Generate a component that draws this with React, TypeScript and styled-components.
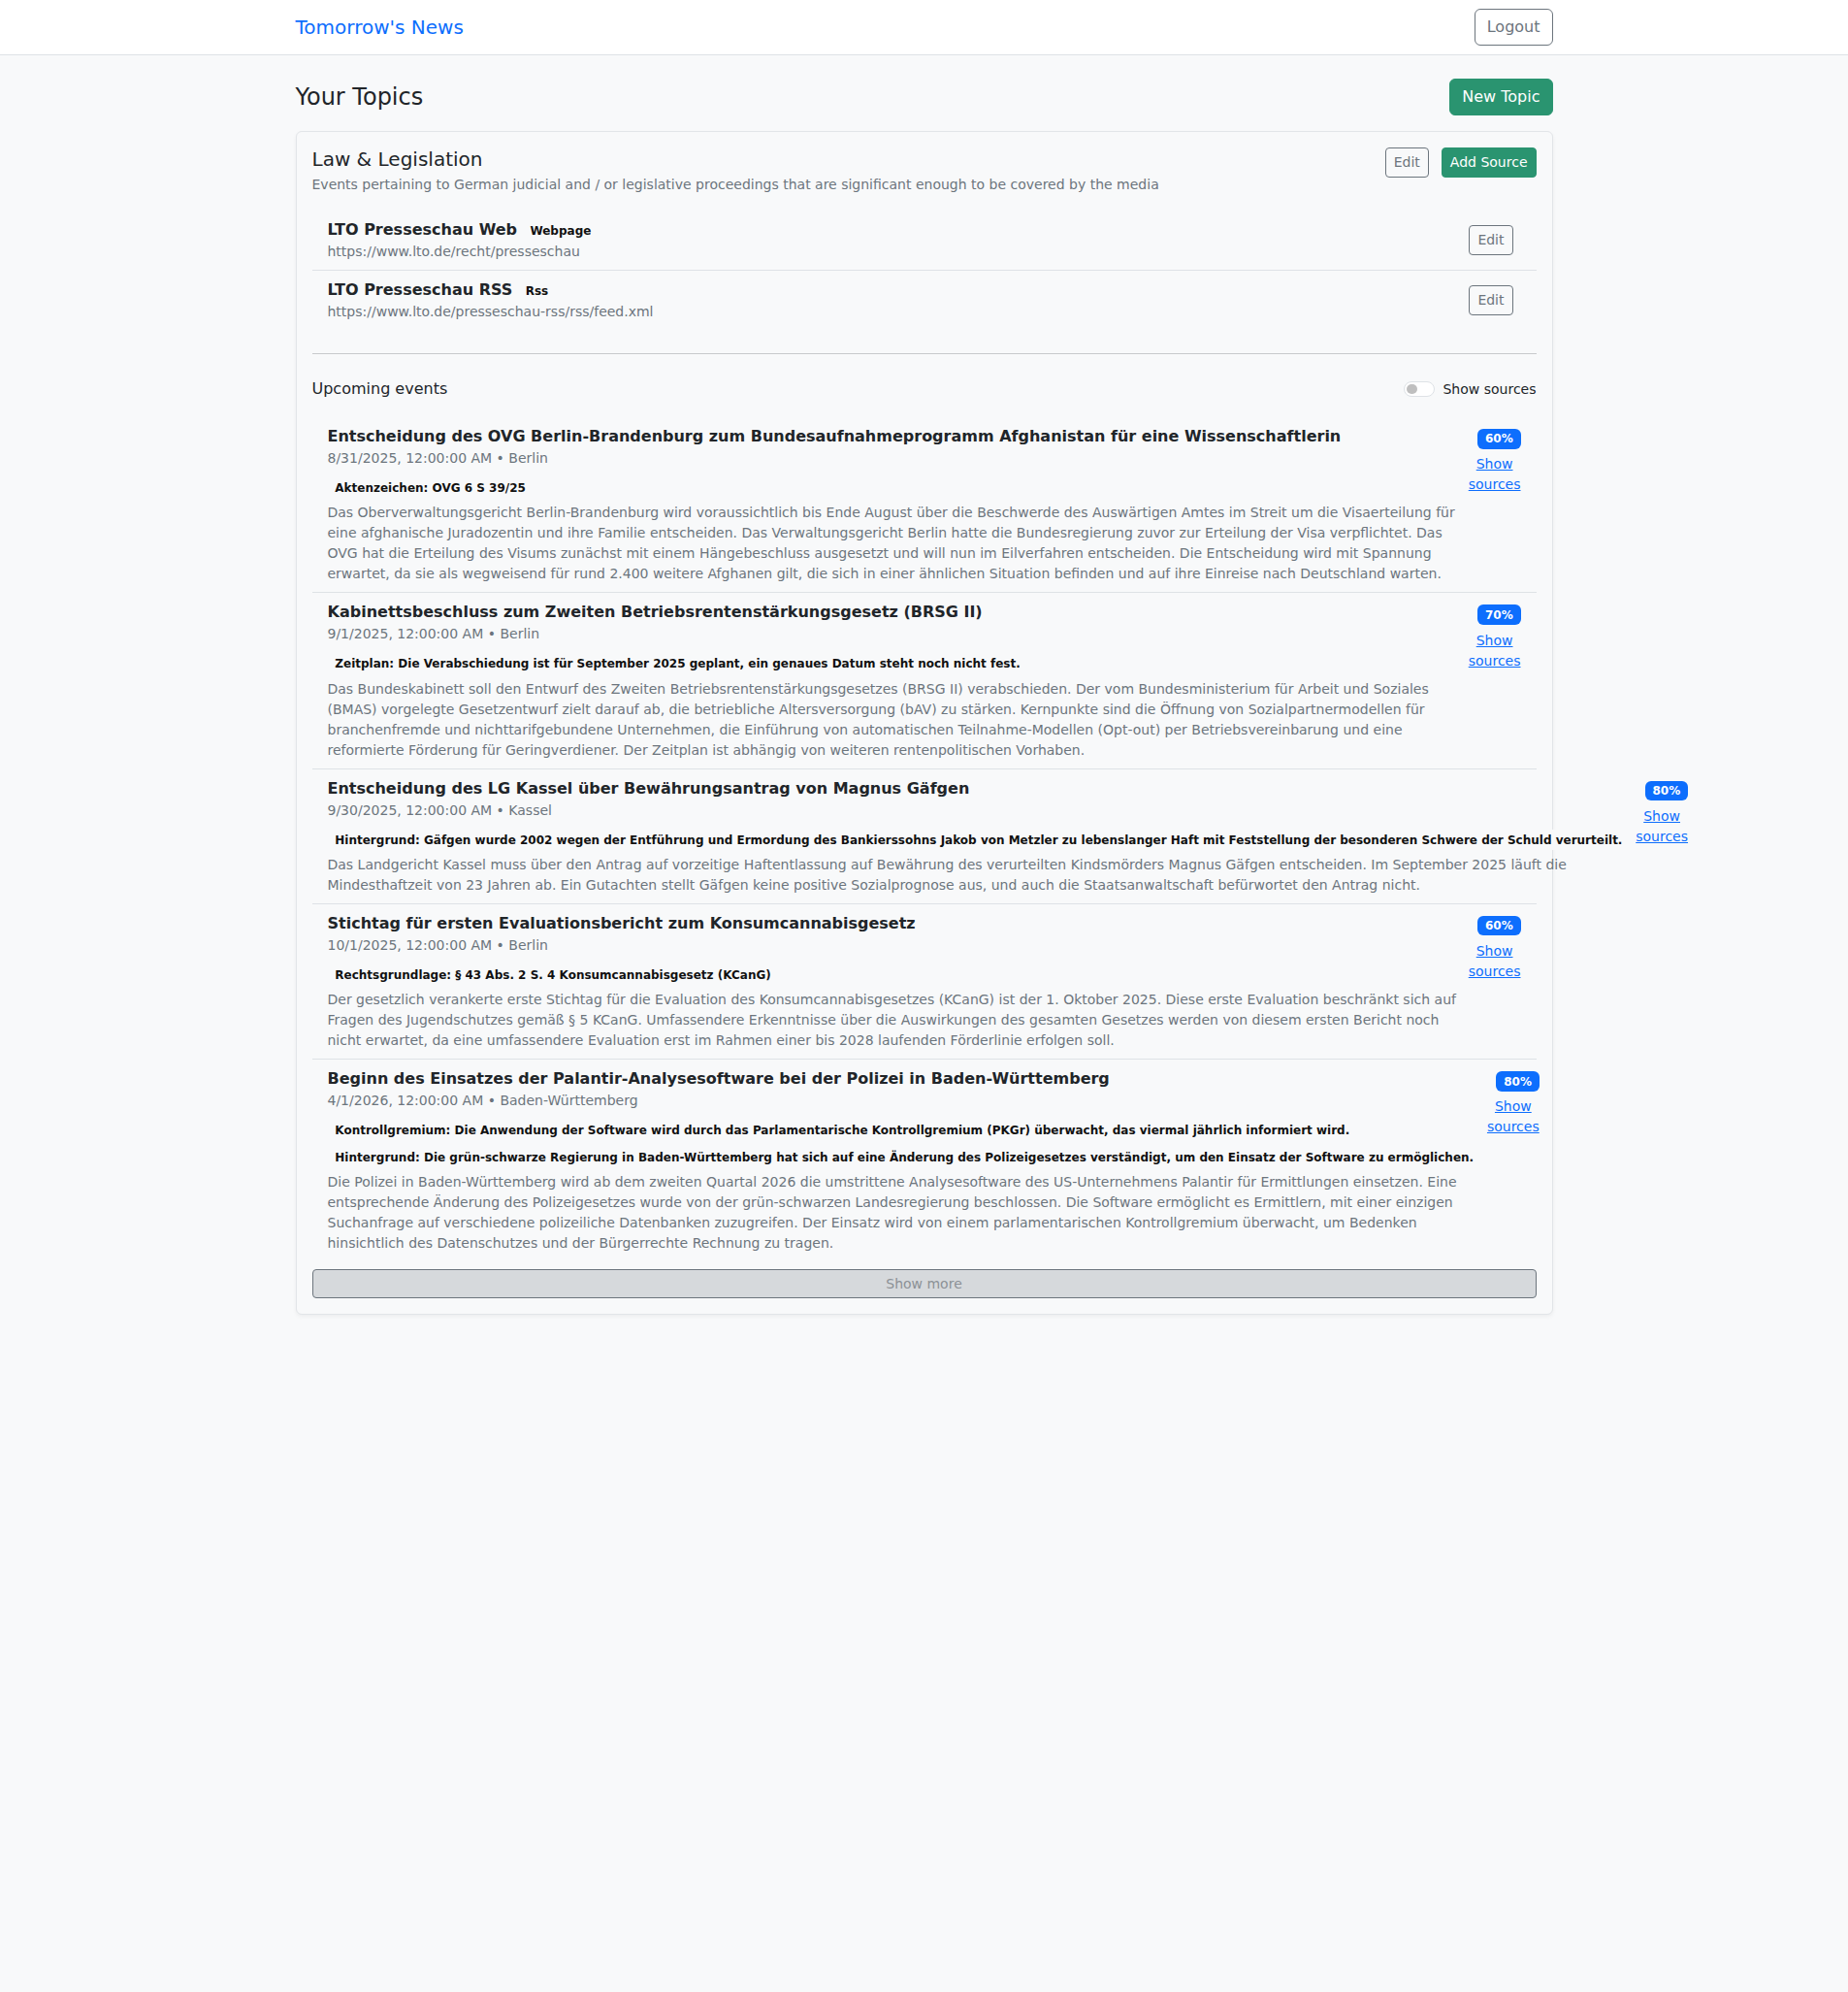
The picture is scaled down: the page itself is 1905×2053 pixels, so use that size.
import React from "react";
import styled, { createGlobalStyle, css } from "styled-components";

const GlobalStyle = createGlobalStyle`
  html, body {
    margin: 0;
    padding: 0;
  }
  body {
    background-color: #f8f9fa;
    color: #212529;
    font-family: "DejaVu Sans", "Noto Sans", sans-serif;
    font-size: 16px;
    line-height: 1.5;
    min-height: 100vh;
  }
  *, *::before, *::after {
    box-sizing: border-box;
  }
`;

const Container = styled.div`
  max-width: 1320px;
  margin: 0 auto;
  padding: 0 12px;
`;

const Navbar = styled.nav`
  background: #fff;
  border-bottom: 1px solid #dee2e6;
  padding: 8px 0;
`;

const NavInner = styled(Container)`
  display: flex;
  align-items: center;
  justify-content: space-between;
`;

const Brand = styled.a`
  color: #0d6efd;
  font-size: 20px;
  line-height: 30px;
  padding: 5px 0;
  text-decoration: none;
`;

type BtnProps = { $variant?: "outline" | "success"; $small?: boolean };

const Button = styled.button<BtnProps>`
  font-family: inherit;
  font-weight: 400;
  cursor: pointer;
  border: 1px solid #6c757d;
  background: transparent;
  color: #6c757d;
  padding: ${(p) => (p.$small ? "4px 8px" : "6px 12px")};
  font-size: ${(p) => (p.$small ? "14px" : "16px")};
  line-height: ${(p) => (p.$small ? "21px" : "24px")};
  border-radius: ${(p) => (p.$small ? "4px" : "6px")};
  ${(p) =>
    p.$variant === "success" &&
    css`
      background: #2a9470;
      border-color: #2a9470;
      color: #fff;
    `}
`;

const Main = styled(Container)`
  padding-top: 24px;
  padding-bottom: 24px;
`;

const PageHeader = styled.div`
  display: flex;
  align-items: center;
  justify-content: space-between;
  margin-bottom: 16px;
`;

const PageTitle = styled.h4`
  margin: 0;
  font-size: 24px;
  font-weight: 500;
  line-height: 1.2;
`;

const Card = styled.section`
  background: #f8f9fa;
  border: 1px solid #e2e5e8;
  border-radius: 6px;
  box-shadow: 0 2px 4px rgba(0, 0, 0, 0.05);
`;

const CardBody = styled.div`
  padding: 16px;
`;

const TopicHeader = styled.div`
  display: flex;
  align-items: flex-start;
  justify-content: space-between;
  margin-bottom: 16px;
`;

const TopicTitle = styled.h5`
  margin: 0 0 4px;
  font-size: 20px;
  font-weight: 500;
  line-height: 1.2;
`;

const Muted = styled.div`
  color: #6c757d;
  font-size: 14px;
  line-height: 21px;
`;

const Actions = styled.div`
  display: flex;
  gap: 13px;
`;

const SourceItem = styled.div`
  display: flex;
  align-items: center;
  justify-content: space-between;
  padding: 8px 24px 8px 16px;
  border-bottom: 1px solid #dee2e6;

  &:last-child {
    border-bottom: none;
  }
`;

const SourceName = styled.div`
  font-weight: 700;
  line-height: 24px;
`;

const Tag = styled.span`
  display: inline-block;
  background: #f8f9fa;
  color: #111;
  font-size: 12px;
  font-weight: 700;
  line-height: 1;
  padding: 4.2px 7.8px;
  border-radius: 6px;
  white-space: nowrap;
`;

const Divider = styled.hr`
  margin: 24px 0;
  border: 0;
  border-top: 1px solid #c8cacc;
`;

const EventsHeader = styled.div`
  display: flex;
  align-items: center;
  justify-content: space-between;
  margin-bottom: 17px;
  line-height: 24px;
`;

const EventsTitle = styled.div`
  font-size: 16px;
`;

const SwitchLabel = styled.label`
  display: flex;
  align-items: center;
  gap: 8px;
  font-size: 14px;
  cursor: pointer;
`;

const Switch = styled.span`
  position: relative;
  display: inline-block;
  width: 32px;
  height: 16px;
  border: 1px solid #dee2e6;
  border-radius: 16px;
  background: #fff;

  &::after {
    content: "";
    position: absolute;
    left: 1.75px;
    top: 1.75px;
    width: 10.5px;
    height: 10.5px;
    border-radius: 50%;
    background: rgba(0, 0, 0, 0.25);
  }
`;

const EventItem = styled.article`
  display: flex;
  gap: 6px;
  padding: 8px 16px;
  border-bottom: 1px solid #dee2e6;

  &:last-child {
    border-bottom: none;
  }
`;

const EventMain = styled.div`
  flex: 1 1 auto;
`;

const EventTitle = styled.div`
  font-weight: 700;
  line-height: 24px;
`;

const DetailList = styled.div`
  display: flex;
  flex-direction: column;
  align-items: flex-start;
  gap: 3.5px;
  margin: 4px 0 7.3px;
`;

const DetailRow = styled.div`
  height: 24px;
  padding-top: 3px;
`;

const EventDesc = styled.p`
  margin: 0;
  color: #6c757d;
  font-size: 14px;
  line-height: 21px;
`;

const EventSide = styled.div`
  flex: 0 0 auto;
  width: min-content;
  display: flex;
  flex-direction: column;
  align-items: flex-end;
`;

const Pct = styled.span`
  display: inline-block;
  margin-top: 4.2px;
  background: #0d6efd;
  color: #fff;
  font-size: 12px;
  font-weight: 700;
  line-height: 1;
  padding: 4.2px 7.8px;
  border-radius: 6px;
`;

const SourcesLink = styled.button`
  margin-top: 5.7px;
  padding: 0;
  border: 0;
  background: none;
  color: #0d6efd;
  text-decoration: underline;
  font-family: inherit;
  font-size: 14px;
  line-height: 21px;
  text-align: center;
  cursor: pointer;
`;

const ShowMore = styled.button`
  display: block;
  width: 100%;
  margin-top: 8.3px;
  padding: 4px 8px;
  font-family: inherit;
  font-size: 14px;
  line-height: 20px;
  color: #8c9196;
  background: #d6d9dc;
  border: 1px solid #6c757d;
  border-radius: 4px;
`;

const sources = [
  { name: "LTO Presseschau Web", kind: "Webpage", url: "https://www.lto.de/recht/presseschau" },
  { name: "LTO Presseschau RSS", kind: "Rss", url: "https://www.lto.de/presseschau-rss/rss/feed.xml" },
];

type EventData = {
  title: string;
  date: string;
  details: string[];
  desc: string;
  pct: number;
};

const events: EventData[] = [
  {
    title:
      "Entscheidung des OVG Berlin-Brandenburg zum Bundesaufnahmeprogramm Afghanistan für eine Wissenschaftlerin",
    date: "8/31/2025, 12:00:00 AM • Berlin",
    details: ["Aktenzeichen: OVG 6 S 39/25"],
    desc: "Das Oberverwaltungsgericht Berlin-Brandenburg wird voraussichtlich bis Ende August über die Beschwerde des Auswärtigen Amtes im Streit um die Visaerteilung für eine afghanische Juradozentin und ihre Familie entscheiden. Das Verwaltungsgericht Berlin hatte die Bundesregierung zuvor zur Erteilung der Visa verpflichtet. Das OVG hat die Erteilung des Visums zunächst mit einem Hängebeschluss ausgesetzt und will nun im Eilverfahren entscheiden. Die Entscheidung wird mit Spannung erwartet, da sie als wegweisend für rund 2.400 weitere Afghanen gilt, die sich in einer ähnlichen Situation befinden und auf ihre Einreise nach Deutschland warten.",
    pct: 60,
  },
  {
    title: "Kabinettsbeschluss zum Zweiten Betriebsrentenstärkungsgesetz (BRSG II)",
    date: "9/1/2025, 12:00:00 AM • Berlin",
    details: [
      "Zeitplan: Die Verabschiedung ist für September 2025 geplant, ein genaues Datum steht noch nicht fest.",
    ],
    desc: "Das Bundeskabinett soll den Entwurf des Zweiten Betriebsrentenstärkungsgesetzes (BRSG II) verabschieden. Der vom Bundesministerium für Arbeit und Soziales (BMAS) vorgelegte Gesetzentwurf zielt darauf ab, die betriebliche Altersversorgung (bAV) zu stärken. Kernpunkte sind die Öffnung von Sozialpartnermodellen für branchenfremde und nichttarifgebundene Unternehmen, die Einführung von automatischen Teilnahme-Modellen (Opt-out) per Betriebsvereinbarung und eine reformierte Förderung für Geringverdiener. Der Zeitplan ist abhängig von weiteren rentenpolitischen Vorhaben.",
    pct: 70,
  },
  {
    title: "Entscheidung des LG Kassel über Bewährungsantrag von Magnus Gäfgen",
    date: "9/30/2025, 12:00:00 AM • Kassel",
    details: [
      "Hintergrund: Gäfgen wurde 2002 wegen der Entführung und Ermordung des Bankierssohns Jakob von Metzler zu lebenslanger Haft mit Feststellung der besonderen Schwere der Schuld verurteilt.",
    ],
    desc: "Das Landgericht Kassel muss über den Antrag auf vorzeitige Haftentlassung auf Bewährung des verurteilten Kindsmörders Magnus Gäfgen entscheiden. Im September 2025 läuft die Mindesthaftzeit von 23 Jahren ab. Ein Gutachten stellt Gäfgen keine positive Sozialprognose aus, und auch die Staatsanwaltschaft befürwortet den Antrag nicht.",
    pct: 80,
  },
  {
    title: "Stichtag für ersten Evaluationsbericht zum Konsumcannabisgesetz",
    date: "10/1/2025, 12:00:00 AM • Berlin",
    details: ["Rechtsgrundlage: § 43 Abs. 2 S. 4 Konsumcannabisgesetz (KCanG)"],
    desc: "Der gesetzlich verankerte erste Stichtag für die Evaluation des Konsumcannabisgesetzes (KCanG) ist der 1. Oktober 2025. Diese erste Evaluation beschränkt sich auf Fragen des Jugendschutzes gemäß § 5 KCanG. Umfassendere Erkenntnisse über die Auswirkungen des gesamten Gesetzes werden von diesem ersten Bericht noch nicht erwartet, da eine umfassendere Evaluation erst im Rahmen einer bis 2028 laufenden Förderlinie erfolgen soll.",
    pct: 60,
  },
  {
    title:
      "Beginn des Einsatzes der Palantir-Analysesoftware bei der Polizei in Baden-Württemberg",
    date: "4/1/2026, 12:00:00 AM • Baden-Württemberg",
    details: [
      "Kontrollgremium: Die Anwendung der Software wird durch das Parlamentarische Kontrollgremium (PKGr) überwacht, das viermal jährlich informiert wird.",
      "Hintergrund: Die grün-schwarze Regierung in Baden-Württemberg hat sich auf eine Änderung des Polizeigesetzes verständigt, um den Einsatz der Software zu ermöglichen.",
    ],
    desc: "Die Polizei in Baden-Württemberg wird ab dem zweiten Quartal 2026 die umstrittene Analysesoftware des US-Unternehmens Palantir für Ermittlungen einsetzen. Eine entsprechende Änderung des Polizeigesetzes wurde von der grün-schwarzen Landesregierung beschlossen. Die Software ermöglicht es Ermittlern, mit einer einzigen Suchanfrage auf verschiedene polizeiliche Datenbanken zuzugreifen. Der Einsatz wird von einem parlamentarischen Kontrollgremium überwacht, um Bedenken hinsichtlich des Datenschutzes und der Bürgerrechte Rechnung zu tragen.",
    pct: 80,
  },
];

export default function App() {
  return (
    <>
      <GlobalStyle />
      <Navbar>
        <NavInner>
          <Brand href="#">Tomorrow's News</Brand>
          <Button $variant="outline">Logout</Button>
        </NavInner>
      </Navbar>

      <Main>
        <PageHeader>
          <PageTitle>Your Topics</PageTitle>
          <Button $variant="success">New Topic</Button>
        </PageHeader>

        <Card>
          <CardBody>
            <TopicHeader>
              <div>
                <TopicTitle>Law &amp; Legislation</TopicTitle>
                <Muted>
                  Events pertaining to German judicial and / or legislative proceedings that are
                  significant enough to be covered by the media
                </Muted>
              </div>
              <Actions>
                <Button $variant="outline" $small>
                  Edit
                </Button>
                <Button $variant="success" $small>
                  Add Source
                </Button>
              </Actions>
            </TopicHeader>

            <div>
              {sources.map((s) => (
                <SourceItem key={s.name}>
                  <div>
                    <SourceName>
                      {s.name} <Tag>{s.kind}</Tag>
                    </SourceName>
                    <Muted>{s.url}</Muted>
                  </div>
                  <Button $variant="outline" $small>
                    Edit
                  </Button>
                </SourceItem>
              ))}
            </div>

            <Divider />

            <EventsHeader>
              <EventsTitle>Upcoming events</EventsTitle>
              <SwitchLabel>
                <Switch />
                Show sources
              </SwitchLabel>
            </EventsHeader>

            <div>
              {events.map((e) => (
                <EventItem key={e.title}>
                  <EventMain>
                    <EventTitle>{e.title}</EventTitle>
                    <Muted>{e.date}</Muted>
                    <DetailList>
                      {e.details.map((d) => (
                        <DetailRow key={d}>
                          <Tag>{d}</Tag>
                        </DetailRow>
                      ))}
                    </DetailList>
                    <EventDesc>{e.desc}</EventDesc>
                  </EventMain>
                  <EventSide>
                    <Pct>{e.pct}%</Pct>
                    <SourcesLink>Show sources</SourcesLink>
                  </EventSide>
                </EventItem>
              ))}
            </div>

            <ShowMore disabled>Show more</ShowMore>
          </CardBody>
        </Card>
      </Main>
    </>
  );
}
